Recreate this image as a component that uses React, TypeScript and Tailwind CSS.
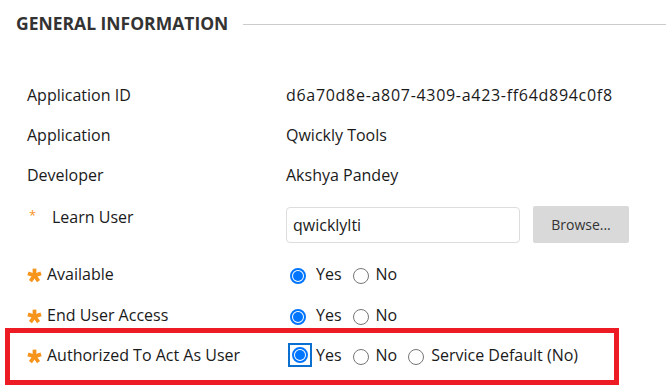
import React from 'react';

const Star = () => (
  <svg className="w-[15px] h-[15px] shrink-0 mt-[2px]" viewBox="0 0 24 24">
    <g stroke="#f7941d" strokeWidth={6} strokeLinecap="butt">
      <line x1="12" y1="12" x2="12" y2="1" />
      <line x1="12" y1="12" x2="22.5" y2="8.6" />
      <line x1="12" y1="12" x2="1.5" y2="8.6" />
      <line x1="12" y1="12" x2="18.5" y2="21" />
      <line x1="12" y1="12" x2="5.5" y2="21" />
    </g>
  </svg>
);

const Radio = ({ checked = false, focused = false }: { checked?: boolean; focused?: boolean }) => {
  const dot = (
    <span
      className={
        'w-[16px] h-[16px] rounded-full flex items-center justify-center ' +
        (checked ? 'border-2 border-[#0075ff]' : 'border border-[#767676]')
      }
    >
      {checked && <span className="w-[10px] h-[10px] rounded-full bg-[#0075ff]" />}
    </span>
  );
  if (focused) {
    return <span className="w-[24px] h-[24px] border-2 border-[#0b6fd0] flex items-center justify-center mr-[4px]">{dot}</span>;
  }
  return <span className={'ml-[4px] mt-[3px] ' + (checked ? 'mr-[10px]' : 'mr-[7px]')}>{dot}</span>;
};

export default function App() {
  return (
    <div className="w-[666px] h-[387px] bg-white text-[#1a1a1a] text-[16px] overflow-hidden" style={{ fontFamily: '"Open Sans", sans-serif' }}>
      {/* Header */}
      <div className="flex items-center pt-[11px] pl-[16px]">
        <h2 className="text-[17.5px] leading-[24px] font-bold text-[#333] whitespace-nowrap">GENERAL INFORMATION</h2>
        <div className="flex-1 h-px bg-[#cccccc] ml-[15px] mt-[2px]" />
      </div>

      <div className="w-[614px] ml-[5px] mt-[40px] leading-[20px]">
        <div className="flex items-center h-[40px] pl-[22px]">
          <div className="w-[259px] shrink-0">Application ID</div>
          <div className="tracking-[0.7px] whitespace-nowrap">d6a70d8e-a807-4309-a423-ff64d894c0f8</div>
        </div>
        <div className="flex items-center h-[40px] pl-[22px]">
          <div className="w-[259px] shrink-0">Application</div>
          <div>Qwickly Tools</div>
        </div>
        <div className="flex items-center h-[40px] pl-[22px]">
          <div className="w-[259px] shrink-0">Developer</div>
          <div>Akshya Pandey</div>
        </div>
        <div className="flex items-start h-[59px] pl-[22px] pt-[12px]">
          <div className="w-[259px] shrink-0 flex items-start">
            <span className="text-[#f7941d] text-[13px] leading-[16px] ml-[2px] w-[23px]">*</span>
            <span>Learn User</span>
          </div>
          <div className="w-[234px] shrink-0 h-[36px] border border-[#dddddd] rounded-[4px] flex items-center px-[6px]">qwicklylti</div>
          <button className="ml-[13px] shrink-0 w-[96px] h-[37px] -mt-[1px] bg-[#d9d9d9] rounded-[2px] text-[14px] text-[#333]">Browse...</button>
        </div>
        <div className="flex items-center h-[40px] pl-[22px]">
          <div className="w-[259px] shrink-0 flex items-center gap-[5px]">
            <Star />
            <span>Available</span>
          </div>
          <div className="flex items-center">
            <Radio checked />
            <span className="mr-[7px]">Yes</span>
            <Radio />
            <span>No</span>
          </div>
        </div>
        <div className="flex items-start h-[34px] pl-[22px] pt-[11px]">
          <div className="w-[259px] shrink-0 flex items-center gap-[5px]">
            <Star />
            <span>End User Access</span>
          </div>
          <div className="flex items-center">
            <Radio checked />
            <span className="mr-[7px]">Yes</span>
            <Radio />
            <span>No</span>
          </div>
        </div>
        <div className="flex items-center h-[57px] border-[5px] border-[#ed1c24] pl-[17px] pb-[3px]">
          <div className="w-[259px] shrink-0 flex items-center gap-[5px]">
            <Star />
            <span>Authorized To Act As User</span>
          </div>
          <div className="flex items-center whitespace-nowrap">
            <span className="ml-[2px]">
              <Radio checked focused />
            </span>
            <span className="mr-[7px]">Yes</span>
            <Radio />
            <span className="mr-[7px]">No</span>
            <Radio />
            <span>Service Default (No)</span>
          </div>
        </div>
      </div>
    </div>
  );
}
